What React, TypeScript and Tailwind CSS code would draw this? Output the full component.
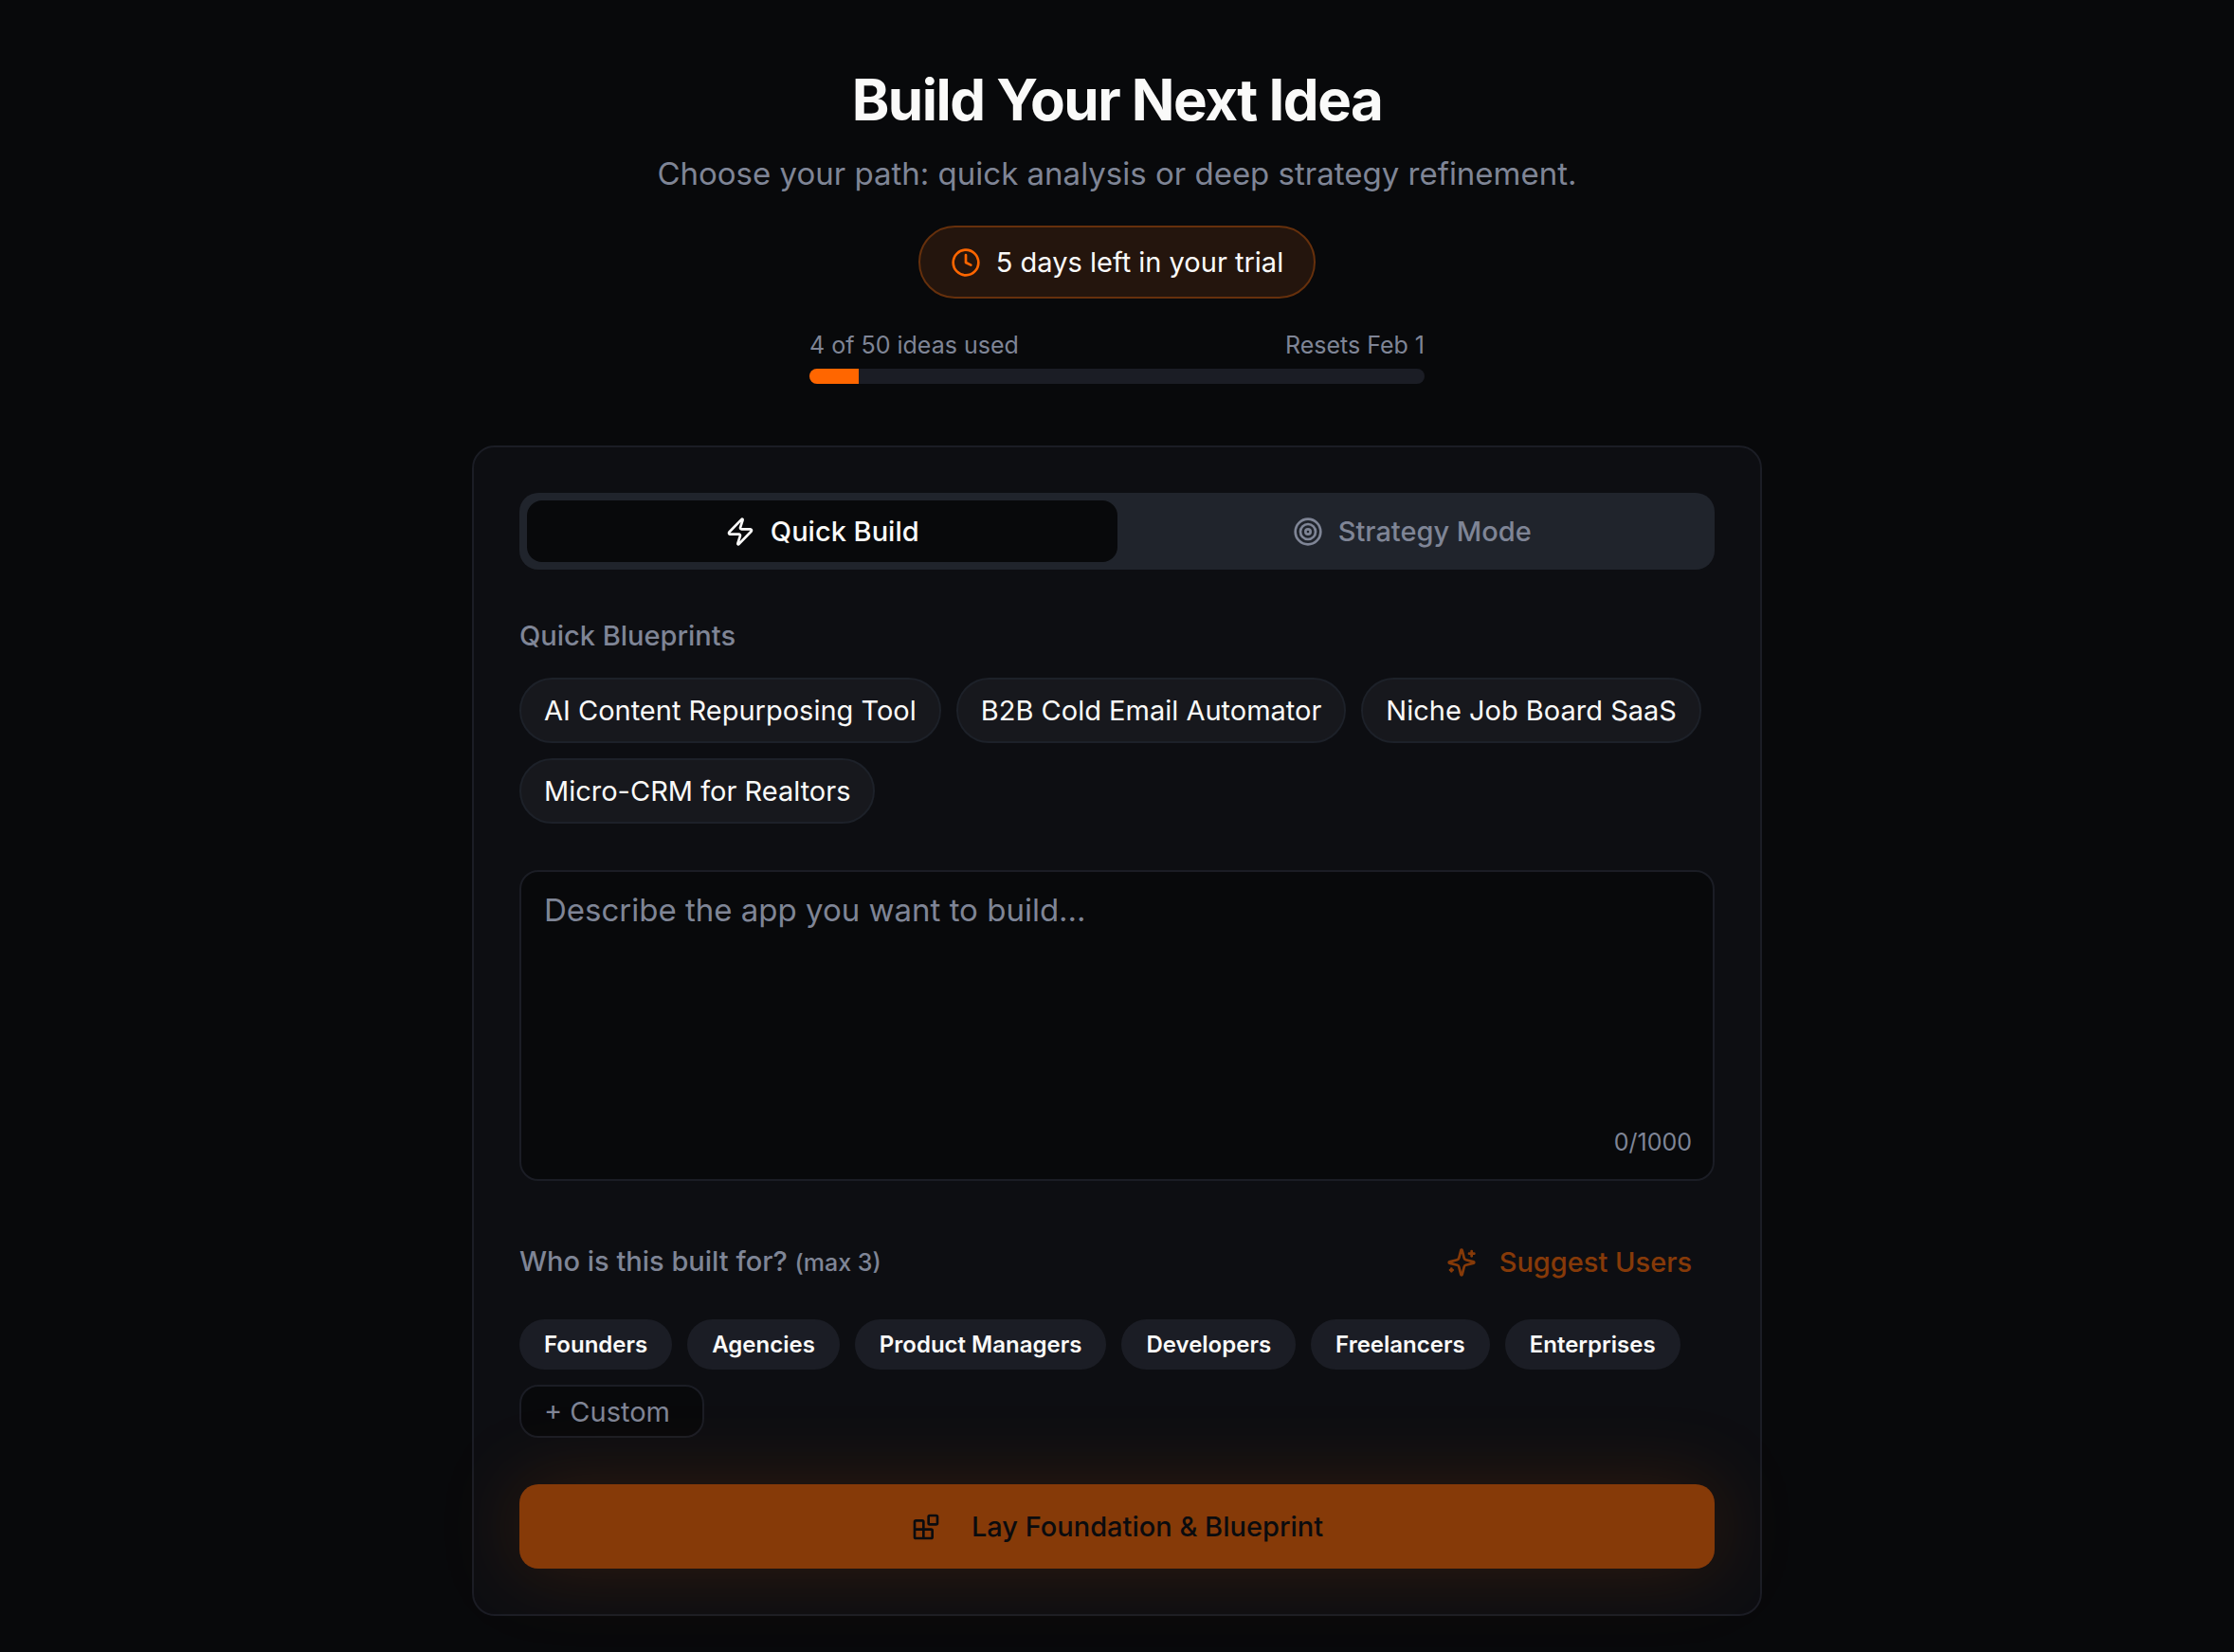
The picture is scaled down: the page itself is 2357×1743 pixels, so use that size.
import { useState } from "react";
import { Clock, Target, Zap } from "lucide-react";

const blueprints = [
  "AI Content Repurposing Tool",
  "B2B Cold Email Automator",
  "Niche Job Board SaaS",
  "Micro-CRM for Realtors",
];

const audiences = [
  "Founders",
  "Agencies",
  "Product Managers",
  "Developers",
  "Freelancers",
  "Enterprises",
];

const MAX_LENGTH = 1000;

function SparklesIcon() {
  return (
    <svg
      className="size-8"
      viewBox="0 0 24 24"
      fill="none"
      stroke="currentColor"
      strokeWidth="2"
      strokeLinecap="round"
      strokeLinejoin="round"
      aria-hidden="true"
    >
      <path d="M9.937 15.5A2 2 0 0 0 8.5 14.063l-6.135-1.582a.5.5 0 0 1 0-.962L8.5 9.936A2 2 0 0 0 9.937 8.5l1.582-6.135a.5.5 0 0 1 .963 0L14.063 8.5A2 2 0 0 0 15.5 9.937l6.135 1.581a.5.5 0 0 1 0 .964L15.5 14.063a2 2 0 0 0-1.437 1.437l-1.582 6.135a.5.5 0 0 1-.963 0z" />
      <path d="M20 3v4" />
      <path d="M22 5h-4" />
      <path d="M4 17v2" />
      <path d="M5 18H3" />
    </svg>
  );
}

function BlocksIcon() {
  return (
    <svg
      className="size-8"
      viewBox="0 0 24 24"
      fill="none"
      stroke="currentColor"
      strokeWidth="2"
      strokeLinecap="round"
      strokeLinejoin="round"
      aria-hidden="true"
    >
      <rect width="7" height="7" x="14" y="3" rx="1" />
      <path d="M10 21V8a1 1 0 0 0-1-1H4a1 1 0 0 0-1 1v12a1 1 0 0 0 1 1h12a1 1 0 0 0 1-1v-5a1 1 0 0 0-1-1H3" />
    </svg>
  );
}

function Usage({ used, total }: { used: number; total: number }) {
  return (
    <div className="mx-auto mt-[33px] w-full max-w-[649px]">
      <div className="flex justify-between text-[25px] leading-[33px] text-[#7f8596]">
        <span>
          {used} of {total} ideas used
        </span>
        <span>Resets Feb 1</span>
      </div>
      <div className="mt-2 h-4 overflow-hidden rounded-full bg-[#1b1d25]">
        <div className="h-full bg-[#ff6600]" style={{ width: `${(used / total) * 100}%` }} />
      </div>
    </div>
  );
}

function ModeTabs({ mode, onChange }: { mode: string; onChange: (mode: string) => void }) {
  const tabs = [
    { id: "quick", label: "Quick Build", Icon: Zap },
    { id: "strategy", label: "Strategy Mode", Icon: Target },
  ];

  return (
    <div role="tablist" className="grid grid-cols-2 rounded-[20px] bg-[#20242c] p-2">
      {tabs.map(({ id, label, Icon }) => (
        <button
          key={id}
          type="button"
          role="tab"
          aria-selected={mode === id}
          onClick={() => onChange(id)}
          className={`flex items-center justify-center gap-4 rounded-2xl py-3 text-[29px] leading-[41px] font-medium ${
            mode === id ? "bg-[#08090b] text-[#fafaf9]" : "text-[#7f8596]"
          }`}
        >
          <Icon className="size-8" />
          {label}
        </button>
      ))}
    </div>
  );
}

export default function App() {
  const [mode, setMode] = useState("quick");
  const [idea, setIdea] = useState("");

  return (
    <div className="min-h-screen bg-[#08090b] px-8 pt-[65px] font-['Inter',sans-serif] text-[#fafaf9]">
      <header className="text-center">
        <h1 className="text-[60px] leading-[80px] font-bold tracking-tight">Build Your Next Idea</h1>
        <p className="mt-4 text-[33px] leading-[44px] text-[#7f8596]">
          Choose your path: quick analysis or deep strategy refinement.
        </p>
        <div className="mt-[33px] inline-flex items-center gap-4 rounded-full border-2 border-[#66300c] bg-[#24150d] px-8 py-4 text-[29px] leading-[41px]">
          <Clock className="size-8 text-[#ff6600]" />
          5 days left in your trial
        </div>
        <Usage used={4} total={50} />
      </header>

      <main className="mx-auto mt-[65px] flex max-w-[1361px] flex-col gap-[49px] rounded-3xl border-2 border-[#1b1d25] bg-[#0d0e12] p-12">
        <ModeTabs mode={mode} onChange={setMode} />

        <section>
          <h2 className="text-[29px] leading-[41px] font-medium text-[#7f8596]">Quick Blueprints</h2>
          <div className="mt-6 flex flex-wrap gap-4">
            {blueprints.map((name) => (
              <button
                key={name}
                type="button"
                onClick={() => setIdea(name)}
                className="rounded-full border-2 border-[#1d2129] bg-[#17181d] px-6 py-3 text-[29px] leading-[41px]"
              >
                {name}
              </button>
            ))}
          </div>
        </section>

        <div className="relative">
          <textarea
            aria-label="App description"
            placeholder="Describe the app you want to build..."
            maxLength={MAX_LENGTH}
            value={idea}
            onChange={(e) => setIdea(e.target.value)}
            className="block h-[328px] w-full resize-none rounded-[20px] border-2 border-[#1b1d25] bg-[#08090b] px-6 py-4 text-[33px] leading-[48px] outline-none placeholder:text-[#7f8596]"
          />
          <span className="absolute right-6 bottom-6 text-[25px] leading-[33px] text-[#7f8596]">
            {idea.length}/{MAX_LENGTH}
          </span>
        </div>

        <section>
          <div className="flex items-center justify-between">
            <h2 className="text-[29px] leading-[41px] font-medium text-[#7f8596]">
              Who is this built for? <span className="text-[25px]">(max 3)</span>
            </h2>
            <button
              type="button"
              disabled
              className="flex h-[73px] items-center gap-6 px-6 text-[29px] font-medium text-[#ff6600] opacity-50"
            >
              <SparklesIcon />
              Suggest Users
            </button>
          </div>
          <div className="mt-6 flex flex-wrap gap-4">
            {audiences.map((name) => (
              <button
                key={name}
                type="button"
                className="rounded-full border-2 border-transparent bg-[#1b1d25] px-6 py-2 text-[24px] leading-[33px] font-semibold"
              >
                {name}
              </button>
            ))}
            <input
              type="text"
              aria-label="Custom audience"
              placeholder="+ Custom"
              className="h-14 w-[195px] rounded-[20px] border-2 border-[#1b1d25] bg-[#08090b] px-6 text-[29px] outline-none placeholder:text-[#7f8596]"
            />
          </div>
        </section>

        <button
          type="button"
          disabled
          className="flex h-[89px] items-center justify-center gap-8 rounded-[20px] bg-[#ff6600] text-[29px] font-medium text-[#08090b] opacity-50 shadow-[0_0_80px_rgba(255,102,0,0.3)]"
        >
          <BlocksIcon />
          Lay Foundation &amp; Blueprint
        </button>
      </main>
    </div>
  );
}
